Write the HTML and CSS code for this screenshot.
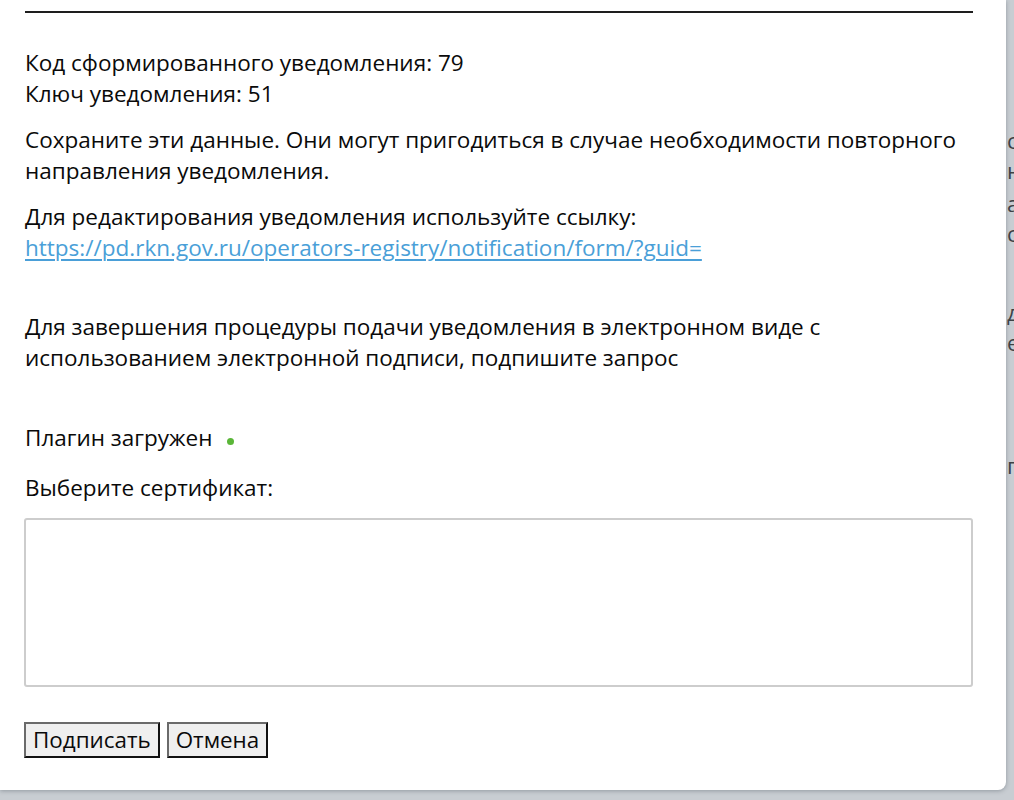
FILE: index.html
```html
<!DOCTYPE html>
<html lang="ru">
<head>
<meta charset="utf-8">
<title>Подписание уведомления</title>
<link rel="stylesheet" href="styles.css">
</head>
<body>
<div class="page">
  <div class="modal">
    <div class="rule"></div>
    <p class="info">Код сформированного уведомления: 79<br>Ключ уведомления: 51</p>
    <p class="para">Сохраните эти данные. Они могут пригодиться в случае необходимости повторного направления уведомления.</p>
    <p class="para">Для редактирования уведомления используйте ссылку:<br><a class="link" href="#">https://pd.rkn.gov.ru/operators-registry/notification/form/?guid=</a></p>
    <p class="para finish">Для завершения процедуры подачи уведомления в электронном виде с использованием электронной подписи, подпишите запрос</p>
    <p class="plugin">Плагин загружен <span class="dot"></span></p>
    <p class="choose">Выберите сертификат:</p>
    <div class="certbox"></div>
    <div class="actions">
      <button class="btn" type="button">Подписать</button>
      <button class="btn" type="button">Отмена</button>
    </div>
  </div>
  <div class="behind">
    <div class="bl b1">с</div>
    <div class="bl b2">н</div>
    <div class="bl b3">а</div>
    <div class="bl b4">с</div>
    <div class="bl b5">д</div>
    <div class="bl b6">е</div>
    <div class="bl b7">г</div>
  </div>
</div>
</body>
</html>
```
FILE: styles.css
```css
html, body {
  margin: 0;
  padding: 0;
}
body {
  background: #c8cdd2;
  font-family: "Open Sans", "Noto Sans", sans-serif;
  color: #0a0a0a;
  overflow: hidden;
}
.page {
  display: flex;
  align-items: flex-start;
  width: 1014px;
  height: 800px;
  overflow: hidden;
}
.modal {
  flex: 0 0 auto;
  box-sizing: border-box;
  width: 1006px;
  height: 790px;
  background: #fff;
  border-radius: 0 0 8px 0;
  box-shadow: 0 1px 4px rgba(80, 90, 100, 0.45);
  padding: 11px 33px 0 25px;
  position: relative;
  z-index: 1;
  font-size: 22.5px;
  line-height: 31px;
}
.rule {
  height: 2px;
  background: #1e1e1e;
}
p {
  margin: 0;
}
.info {
  margin-top: 34px;
}
.para {
  margin-top: 15px;
}
.link {
  color: #4a9fd8;
  text-decoration: underline;
  text-underline-offset: 3px;
  text-decoration-thickness: 1.5px;
}
.finish {
  margin-top: 48px;
}
.plugin {
  margin-top: 49px;
  display: flex;
  align-items: center;
}
.dot {
  display: inline-block;
  width: 7px;
  height: 7px;
  border-radius: 50%;
  background: #5ab638;
  margin-left: 15px;
  margin-top: 8px;
}
.choose {
  margin-top: 19px;
}
.certbox {
  margin-top: 15px;
  height: 165px;
  border: 2px solid #cdcdcd;
  border-radius: 3px;
  margin-left: -1px;
}
.actions {
  margin-top: 35px;
  display: flex;
  gap: 7px;
  margin-left: -1px;
}
.btn {
  font-family: "Open Sans", "Noto Sans", sans-serif;
  font-size: 22.4px;
  line-height: 30px;
  padding: 1px 7px 1px;
  background: #efefef;
  color: #0a0a0a;
  border: 2px solid;
  border-color: #6a6a6a #111 #111 #6a6a6a;
  border-radius: 0;
}
.behind {
  flex: 1 1 auto;
  min-width: 0;
  overflow: hidden;
  white-space: nowrap;
  font-size: 22px;
  line-height: 30px;
  color: #3e4246;
  padding-top: 125px;
  padding-left: 1px;
}
.bl {
  height: 30px;
}
.b3 {
  margin-top: 3px;
}
.b5 {
  margin-top: 49px;
}
.b7 {
  margin-top: 93px;
}
```
